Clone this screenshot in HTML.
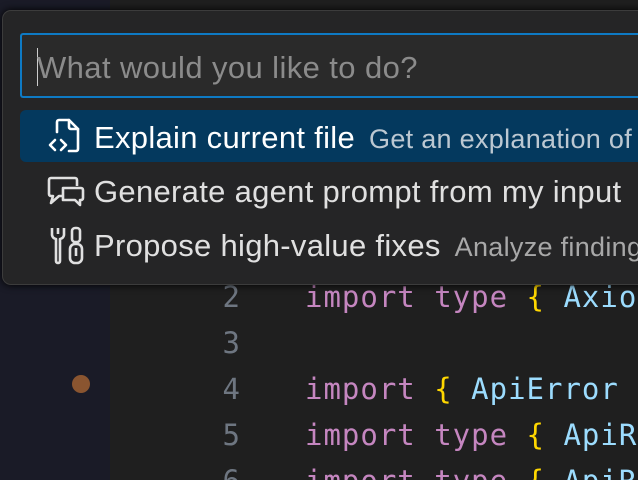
<!DOCTYPE html>
<html><head><meta charset="utf-8"><style>
html,body{margin:0;padding:0;width:638px;height:480px;overflow:hidden;background:#1f1f1f;font-family:"Liberation Sans",sans-serif;position:relative}
.gutter{position:absolute;left:0;top:0;width:110px;height:480px;background:#1a1b27}
.ln{position:absolute;width:240px;text-align:right;left:0;font:29px "DejaVu Sans Mono",monospace;color:#6e7681}
.code{position:absolute;left:305px;font:29px "DejaVu Sans Mono",monospace;letter-spacing:1px;color:#9cdcfe;white-space:pre}
.k{color:#c586c0}.b{color:#ffd700}
.dot{position:absolute;left:72px;top:375px;width:18px;height:18px;border-radius:50%;background:#8a5530}
.w{position:absolute;left:2px;top:10px;width:640px;height:273px;background:#252526;border:1px solid #3c3c3c;border-right:none;border-radius:9px 0 0 9px;box-shadow:0 0 8px #000;overflow:hidden}
.inp{position:absolute;left:17px;top:22px;width:640px;height:65px;border:2px solid #0e7ac4;border-right:none;border-radius:3px;background:#2a2a2a;box-sizing:border-box}
.inp span{position:absolute;left:15px;top:15px;font-size:31px;letter-spacing:0.4px;color:#8b8b8b;white-space:nowrap}
.inp i{position:absolute;left:15px;top:13px;width:1px;height:38px;background:#ccc}
.row{position:absolute;left:17px;width:640px;height:52px;border-radius:6px 0 0 6px}
.row.sel{background:#04395e}
.row .t{position:absolute;left:74px;top:10px;font-size:31px;letter-spacing:0.3px;color:#e0e0e0;white-space:nowrap}
.row .t small{font-size:27px;letter-spacing:0.3px;color:#a8a8a8;margin-left:14px}
.row.sel .t{color:#fff}.row.sel .t small{color:#bcc8d2}
.row svg{position:absolute;left:27px;top:8px}
</style></head><body>
<div class="gutter"></div>
<div class="dot"></div>
<div class="ln" style="top:280px">2</div>
<div class="ln" style="top:326px">3</div>
<div class="ln" style="top:372px">4</div>
<div class="ln" style="top:418px">5</div>
<div class="ln" style="top:464px">6</div>
<div class="code" style="top:280px"><span class="k">import type</span> <span class="b">{</span> Axios</div>
<div class="code" style="top:372px"><span class="k">import</span> <span class="b">{</span> ApiError</div>
<div class="code" style="top:418px"><span class="k">import type</span> <span class="b">{</span> ApiR</div>
<div class="code" style="top:464px"><span class="k">import type</span> <span class="b">{</span> ApiR</div>
<div class="w">
 <div class="inp"><i></i><span>What would you like to do?</span></div>
 <div class="row sel" style="top:99px">
  <svg width="40" height="38" viewBox="0 0 40 38" fill="none" stroke="#fff" stroke-width="2.6" stroke-linejoin="round" stroke-linecap="round"><path d="M10 14V4a2 2 0 0 1 2-2h10l9 9v20a2 2 0 0 1-2 2h-7"/><path d="M22 2v7a2 2 0 0 0 2 2h7"/><path d="M8 22l-5 5 5 5"/><path d="M14 22l5 5-5 5"/></svg>
  <div class="t">Explain current file<small>Get an explanation of the current file</small></div>
 </div>
 <div class="row" style="top:153px">
  <svg width="40" height="40" viewBox="0 0 40 40" fill="none" stroke="#e0e0e0" stroke-width="2.6" stroke-linejoin="round"><path d="M4 6h24a2 2 0 0 1 2 2v6M4 6a2 2 0 0 0-2 2v14a2 2 0 0 0 2 2h2l-2 7 8-7h4"/><path d="M16 16h18a2 2 0 0 1 2 2v8a2 2 0 0 1-2 2h-1v5l-5-5H16z"/></svg>
  <div class="t">Generate agent prompt from my input</div>
 </div>
 <div class="row" style="top:207px">
  <svg width="40" height="40" viewBox="0 0 40 40" fill="none" stroke="#e0e0e0" stroke-width="2.6" stroke-linejoin="round"><path d="M5 2v7a5 5 0 0 0 4 4v22a2 2 0 0 0 4 0V13a5 5 0 0 0 4-4V2M11 2v6"/><rect x="25" y="2" width="8" height="14" rx="3"/><rect x="23" y="18" width="12" height="19" rx="5"/><path d="M29 22v8"/></svg>
  <div class="t">Propose high-value fixes<small>Analyze findings and propose fixes</small></div>
 </div>
</div>
</body></html>
